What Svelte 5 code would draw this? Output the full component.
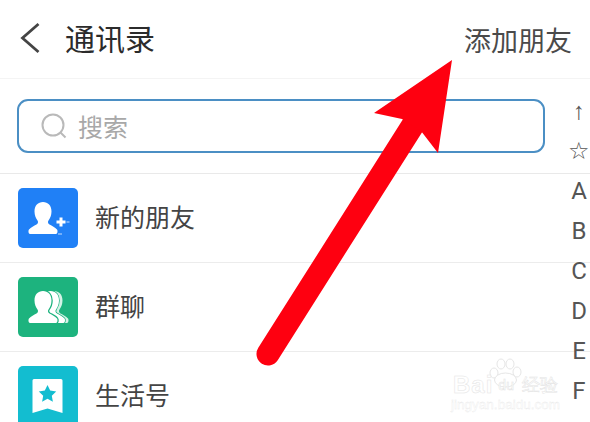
<script lang="ts">
  const contacts = [
    { name: "新的朋友", kind: "add", color: "#2080f6" },
    { name: "群聊", kind: "group", color: "#1db37e" },
    { name: "生活号", kind: "life", color: "#13bdd0" },
  ];
  const indexKeys = ["↑", "☆", "A", "B", "C", "D", "E", "F"];

  // same silhouette for the two people icons
  const person =
    "M25 14c-5 0-8.500 3.500-8.500 9.500 0 4 1.500 7 3 9 1 1.500 .5 3-1 4-2.500 1.500-5.500 2.500-7.500 5-1 1.300-.5 4.500 1 4.500h26c1.500 0 2-3.200 1-4.500-2-2.500-5-3.500-7.500-5-1.500-1-2-2.500-1-4 1.500-2 3-5 3-9C33.500 17.500 30 14 25 14z";
</script>

<main class="page">
  <header class="topBar">
    <div class="titleWrap">
      <svg class="back" viewBox="0 0 24 34" width="24" height="34">
        <path d="M18.500 3 L2.500 17 L18.500 31" fill="none" stroke="#444" stroke-width="2.800" />
      </svg>
      <h1>通讯录</h1>
    </div>
    <span class="addFriend">添加朋友</span>
  </header>

  <div class="searchWrap">
    <div class="searchBox">
      <svg viewBox="0 0 26 26" width="26" height="26">
        <circle cx="12" cy="12" r="10.500" fill="none" stroke="#b9b9b9" stroke-width="2" />
        <path d="M19.500 19.500 L24.500 24.500" stroke="#b9b9b9" stroke-width="2" />
      </svg>
      <span>搜索</span>
    </div>
  </div>

  <ul class="list">
    {#each contacts as item}
      <li class="row">
        <div class="avatar" style="background-color: {item.color}">
          {#if item.kind === "add"}
            <svg viewBox="0 0 60 60" width="60" height="60">
              <path fill="#fff" d={person} />
              <path stroke="#fff" stroke-width="3" d="M43 29.500v9M38.500 34h9" />
              <path stroke="#8dbdfa" stroke-width="1.500" d="M48.500 34h3M40 46h4" />
            </svg>
          {:else if item.kind === "group"}
            <svg viewBox="0 0 60 60" width="60" height="60">
              <path fill="#d4f2e6" transform="translate(11 0)" d={person} />
              <path fill="#fff" stroke="#1db37e" stroke-width="1.500" paint-order="stroke" transform="translate(7.500 0)" d={person} />
              <path fill="#fff" stroke="#1db37e" stroke-width="2.500" paint-order="stroke" d={person} />
            </svg>
          {:else}
            <svg viewBox="0 0 60 60" width="60" height="60">
              <path fill="#fff" d="M16 13h27a1.500 1.500 0 0 1 1.500 1.500V47l-15-4.500L14.500 47V14.500A1.500 1.500 0 0 1 16 13z" />
              <path fill="#13bdd0" d="M29.500 19l2.700 5.500 6 .9-4.400 4.300 1.100 6-5.400-2.900-5.400 2.900 1.100-6-4.400-4.300 6-.9z" />
            </svg>
          {/if}
        </div>
        <span class="name">{item.name}</span>
      </li>
    {/each}
  </ul>

  <nav class="indexBar">
    {#each indexKeys as key}
      <span>{key}</span>
    {/each}
  </nav>

  <div class="watermark">
    <svg viewBox="0 0 34 30" width="34" height="30">
      <g fill="#fff" stroke="#e6e6e6" stroke-width="1">
        <ellipse cx="6" cy="15" rx="4" ry="5" />
        <ellipse cx="13" cy="6" rx="4" ry="5" />
        <ellipse cx="22" cy="6" rx="4" ry="5" />
        <ellipse cx="29" cy="14" rx="4" ry="5" />
        <ellipse cx="17.500" cy="22" rx="11" ry="7" />
      </g>
    </svg>
    <div class="markLine"><b>Bai</b><i>du</i><em>经验</em></div>
    <small>jingyan.baidu.com</small>
  </div>

  <svg class="arrow" viewBox="0 0 590 422" width="590" height="422">
    <path d="M268 354 L413 125" fill="none" stroke="#fe0010" stroke-width="23" stroke-linecap="round" />
    <path d="M452 60 L374 113 L402 119 L421 131 L438 153z" fill="#fe0010" />
  </svg>
</main>

<style>
  :global(body) {
    margin: 0;
    background: #fff;
  }

  .page {
    position: relative;
    width: 590px;
    height: 422px;
    overflow: hidden;
    background: #fff;
    font-family: "Noto Sans CJK SC", "Liberation Sans", sans-serif;
    color: #444;
  }

  .topBar {
    display: flex;
    justify-content: space-between;
    align-items: center;
    height: 79px;
    box-sizing: border-box;
    padding: 0 18px 0 20px;
    border-bottom: 1px solid #f4f4f4;
  }

  .titleWrap {
    display: flex;
    align-items: center;
    gap: 21px;
    margin-bottom: 3px;

    & h1 {
      margin: 0 0 1px;
      font-size: 30px;
      font-weight: 400;
      color: #2b2b2b;
      line-height: 1;
    }
  }

  .addFriend {
    font-size: 27px;
    color: #4a4a4a;
    line-height: 1;
  }

  .searchWrap {
    height: 95px;
    box-sizing: border-box;
    padding: 20px 45px 0 17px;
    border-bottom: 1px solid #e9e9e9;
  }

  .searchBox {
    display: flex;
    align-items: center;
    gap: 11px;
    height: 54px;
    box-sizing: border-box;
    padding: 0 0 0 22px;
    border: 2px solid #4b8fc4;
    border-radius: 11px;

    & span {
      font-size: 25px;
      color: #a8a8a8;
    }
  }

  .list {
    margin: 0;
    padding: 0;
    list-style: none;
  }

  .row {
    display: flex;
    align-items: center;
    gap: 17px;
    height: 89px;
    box-sizing: border-box;
    padding: 0 0 0 18px;
    border-bottom: 1px solid #ececec;
  }

  .avatar {
    width: 60px;
    height: 60px;
    flex: none;
    border-radius: 5px;
  }

  .avatar svg {
    display: block;
  }

  .name {
    font-size: 25px;
    color: #444;
    padding-bottom: 5px;
  }

  .indexBar {
    position: absolute;
    top: 91px;
    right: 0;
    width: 22px;
    display: flex;
    flex-direction: column;
    align-items: center;
    font-family: Roboto, "Liberation Sans", sans-serif;
    font-size: 24px;
    color: #555;

    & span {
      height: 40px;
      line-height: 40px;
    }
  }

  .watermark {
    position: absolute;
    left: 453px;
    top: 358px;
    width: 105px;
    display: flex;
    flex-direction: column;
    align-items: center;
    color: #fff;

    & svg {
      margin-left: -2px;
    }

    & .markLine {
      display: flex;
      align-items: center;
      width: 100%;
      margin-top: -14px;
      height: 22px;
      font-family: "Liberation Sans", sans-serif;
      font-size: 24px;
      line-height: 22px;
      white-space: nowrap;
      -webkit-text-stroke: 0.5px #e4e4e4;
    }

    & b {
      font-weight: 700;
      letter-spacing: 1px;
    }

    & i {
      font-style: normal;
      font-size: 14px;
      margin: 0 8px 0 5px;
    }

    & em {
      font-style: normal;
      font-size: 18px;
    }

    & small {
      font-family: "Liberation Sans", sans-serif;
      font-size: 13.500px;
      line-height: 18px;
      white-space: nowrap;
      -webkit-text-stroke: 0.3px #e8e8e8;
    }
  }

  .arrow {
    position: absolute;
    top: 0;
    left: 0;
  }
</style>
